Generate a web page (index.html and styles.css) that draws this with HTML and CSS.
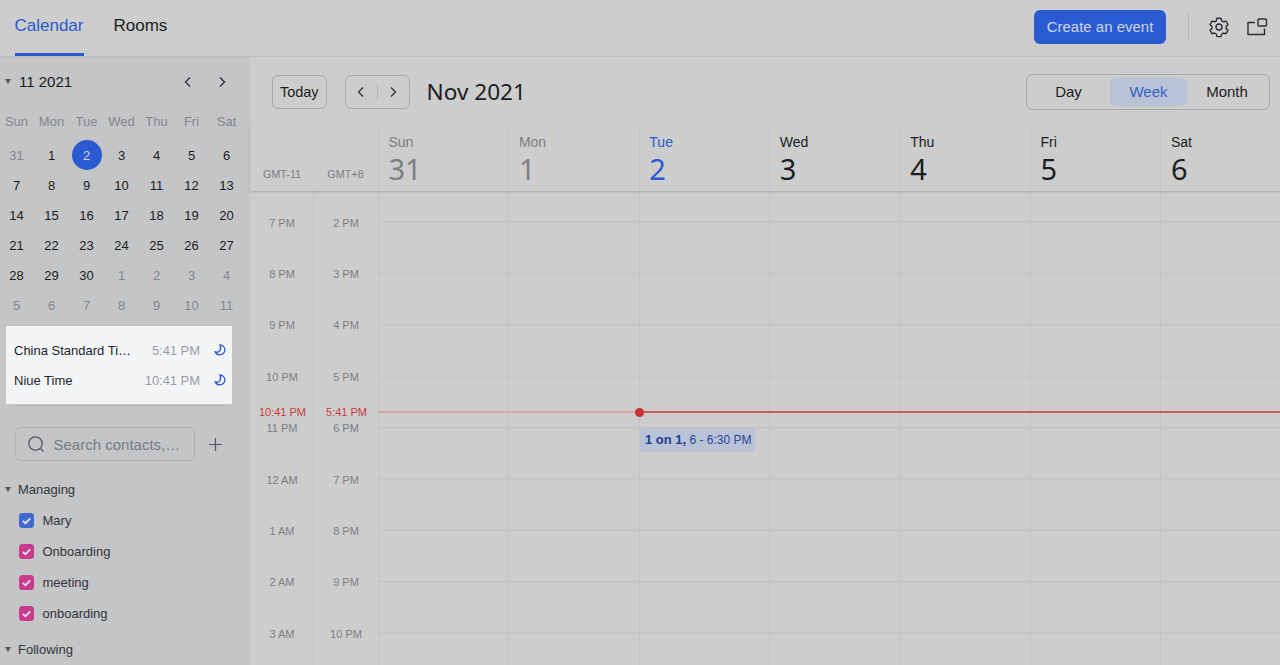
FILE: index.html
```html
<!DOCTYPE html>
<html lang="en">
<head>
<meta charset="utf-8">
<title>Calendar</title>
<link rel="stylesheet" href="styles.css">
</head>
<body>
<header class="topbar">
  <nav class="tabs">
    <a class="tab active">Calendar</a>
    <a class="tab">Rooms</a>
  </nav>
  <div class="top-actions">
    <button class="create">Create an event</button>
    <span class="top-sep"></span>
    <svg class="icon-top" viewBox="0 0 22 22" fill="none" stroke="#2b2f36" stroke-width="1.4" stroke-linejoin="round"><path d="M9 2.200h4l.7 2.600 1.700 1 2.600-.7 2 3.400-1.900 1.900v2l1.900 1.900-2 3.400-2.600-.7-1.700 1-.7 2.600H9l-.7-2.600-1.700-1-2.600.7-2-3.400 1.900-1.900v-2L2 8.500l2-3.400 2.600.7 1.700-1z"/><circle cx="11" cy="11" r="3"/></svg>
    <svg class="icon-top" viewBox="0 0 22 22" fill="none" stroke="#2b2f36" stroke-width="1.4" stroke-linejoin="round"><path d="M9 6.500H2v12h16.500V12.500"/><rect x="12" y="3" width="8.500" height="7" rx="1"/></svg>
  </div>
</header>
<div class="main">
  <aside class="sidebar">
    <div class="mini-head">
      <span class="caret"></span><span class="mini-title">11 2021</span>
      <span class="mini-arrows">
        <svg class="chev" viewBox="0 0 12 12"><path d="M8 1.500 3.500 6 8 10.500"/></svg>
        <svg class="chev" viewBox="0 0 12 12"><path d="M4 1.500 8.500 6 4 10.500"/></svg>
      </span>
    </div>
    <div class="mini-grid">
      <span class="wd">Sun</span><span class="wd">Mon</span><span class="wd">Tue</span><span class="wd">Wed</span><span class="wd">Thu</span><span class="wd">Fri</span><span class="wd">Sat</span>
      <span class="d off">31</span><span class="d">1</span><span class="d"><b class="today">2</b></span><span class="d">3</span><span class="d">4</span><span class="d">5</span><span class="d">6</span>
      <span class="d">7</span><span class="d">8</span><span class="d">9</span><span class="d">10</span><span class="d">11</span><span class="d">12</span><span class="d">13</span>
      <span class="d">14</span><span class="d">15</span><span class="d">16</span><span class="d">17</span><span class="d">18</span><span class="d">19</span><span class="d">20</span>
      <span class="d">21</span><span class="d">22</span><span class="d">23</span><span class="d">24</span><span class="d">25</span><span class="d">26</span><span class="d">27</span>
      <span class="d">28</span><span class="d">29</span><span class="d">30</span><span class="d off">1</span><span class="d off">2</span><span class="d off">3</span><span class="d off">4</span>
      <span class="d off">5</span><span class="d off">6</span><span class="d off">7</span><span class="d off">8</span><span class="d off">9</span><span class="d off">10</span><span class="d off">11</span>
    </div>
    <div class="zones">
      <div class="zone"><span class="zone-name">China Standard Ti…</span><span class="zone-time">5:41 PM</span><svg class="moon" viewBox="0 0 12 12"><path d="M6 1c2.900.3 5 2.500 4.900 5.200-.1 2.700-2.400 4.800-5.100 4.700-2-.1-3.800-1.200-4.500-3 1.500.6 3.300.3 4.400-1 1.100-1.500 1.100-3.900.3-5.900z"/></svg></div>
      <div class="zone"><span class="zone-name">Niue Time</span><span class="zone-time">10:41 PM</span><svg class="moon" viewBox="0 0 12 12"><path d="M6 1c2.900.3 5 2.500 4.900 5.200-.1 2.700-2.400 4.800-5.100 4.700-2-.1-3.800-1.200-4.500-3 1.500.6 3.300.3 4.400-1 1.100-1.500 1.100-3.900.3-5.900z"/></svg></div>
    </div>
    <div class="zone-rule"></div>
    <div class="search-row">
      <div class="search">
        <svg class="search-ic" viewBox="0 0 18 18"><circle cx="8.500" cy="8.500" r="6.700"/><path d="m13.500 13.500 3 3"/></svg>
        <span>Search contacts,…</span>
      </div>
      <svg class="plus" viewBox="0 0 16 16"><path d="M8 1v14M1 8h14"/></svg>
    </div>
    <div class="group"><span class="caret"></span>Managing</div>
    <div class="cal"><span class="check blue"><svg viewBox="0 0 10 10"><path d="m2.500 5.200 1.800 1.600L7.500 3.600"/></svg></span>Mary</div>
    <div class="cal"><span class="check pink"><svg viewBox="0 0 10 10"><path d="m2.500 5.200 1.800 1.600L7.500 3.600"/></svg></span>Onboarding</div>
    <div class="cal"><span class="check pink"><svg viewBox="0 0 10 10"><path d="m2.500 5.200 1.800 1.600L7.500 3.600"/></svg></span>meeting</div>
    <div class="cal"><span class="check pink"><svg viewBox="0 0 10 10"><path d="m2.500 5.200 1.800 1.600L7.500 3.600"/></svg></span>onboarding</div>
    <div class="group following"><span class="caret"></span>Following</div>
  </aside>
  <section class="content">
    <div class="toolbar">
      <button class="btn today-btn">Today</button>
      <div class="btn nav-btn">
        <svg class="chev" viewBox="0 0 12 12"><path d="M8 1.500 3.500 6 8 10.500"/></svg>
        <span class="nav-sep"></span>
        <svg class="chev" viewBox="0 0 12 12"><path d="M4 1.500 8.500 6 4 10.500"/></svg>
      </div>
      <h1 class="range">Nov 2021</h1>
      <div class="segment">
        <span class="seg">Day</span><span class="seg on">Week</span><span class="seg">Month</span>
      </div>
    </div>
    <div class="week-head">
      <div class="gmt first">GMT-11</div>
      <div class="gmt">GMT+8</div>
      <div class="day past"><span class="dn">Sun</span><span class="dd">31</span></div>
      <div class="day past"><span class="dn">Mon</span><span class="dd">1</span></div>
      <div class="day now"><span class="dn">Tue</span><span class="dd">2</span></div>
      <div class="day"><span class="dn">Wed</span><span class="dd">3</span></div>
      <div class="day"><span class="dn">Thu</span><span class="dd">4</span></div>
      <div class="day"><span class="dn">Fri</span><span class="dd">5</span></div>
      <div class="day"><span class="dn">Sat</span><span class="dd">6</span></div>
    </div>
    <div class="week-body">
      <div class="times first">
        <span>7 PM</span><span>8 PM</span><span>9 PM</span><span>10 PM</span><span>11 PM</span><span>12 AM</span><span>1 AM</span><span>2 AM</span><span>3 AM</span>
      </div>
      <div class="times second">
        <span>2 PM</span><span>3 PM</span><span>4 PM</span><span>5 PM</span><span>6 PM</span><span>7 PM</span><span>8 PM</span><span>9 PM</span><span>10 PM</span>
      </div>
      <div class="col"></div><div class="col"></div><div class="col"></div><div class="col"></div><div class="col"></div><div class="col"></div><div class="col"></div>
      <span class="now-label l1">10:41 PM</span>
      <span class="now-label l2">5:41 PM</span>
      <span class="now-past"></span>
      <span class="now-line"></span>
      <span class="now-dot"></span>
      <div class="event"><b>1 on 1,</b> 6 - 6:30 PM</div>
    </div>
  </section>
</div>
</body>
</html>
```

FILE: styles.css
```css
* { box-sizing: border-box; }
html, body { margin: 0; height: 665px; overflow: hidden; }
body {
  background: #cdcdcd;
  color: #1c1e22;
  font-family: "Liberation Sans", Arial, sans-serif;
  font-size: 13px;
}
button { font-family: inherit; }

.topbar {
  height: 57px;
  display: flex;
  justify-content: space-between;
  align-items: center;
  padding: 0 12px 2px 14.500px;
  border-bottom: 1px solid #bebebf;
}
.tabs { display: flex; gap: 30px; height: 56px; align-self: flex-start; }
.tab {
  font-size: 17px;
  line-height: 52px;
  height: 56px;
  color: #1c1e22;
}
.tab.active { color: #2a5bd0; border-bottom: 3px solid #2a5bd0; }
.top-actions { display: flex; align-items: center; }
.create {
  width: 132px;
  height: 34px;
  padding: 0 0 2px;
  border: 0;
  border-radius: 6px;
  background: #2a5bd0;
  color: #cdd6ee;
  font-size: 15px;
}
.top-sep { width: 1px; height: 26px; background: #b7b7b8; margin: 0 9px 0 22px; }
.icon-top { width: 22px; height: 22px; margin-left: 10px; }
.icon-top + .icon-top { margin-left: 16px; }

.main { display: flex; height: 608px; }
.sidebar {
  width: 250px;
  flex: none;
  background: #c4c5c7;
  overflow: hidden;
}
.mini-head {
  display: flex;
  align-items: center;
  height: 50px;
  padding: 0 0 1px 5px;
}
.caret {
  width: 0;
  height: 0;
  flex: none;
  border: 3.500px solid transparent;
  border-top: 5px solid #55585e;
  border-bottom: 0;
  margin-right: 7px;
}
.mini-title { font-size: 15px; color: #1c1e22; margin-left: 1px; }
.mini-arrows { display: flex; gap: 22px; margin-left: auto; margin-right: 22px; }
.chev { width: 12px; height: 12px; fill: none; stroke: #2b2f36; stroke-width: 1.300; }

.mini-grid {
  display: grid;
  grid-template-columns: repeat(7, 35px);
  grid-template-rows: repeat(7, 30px);
  margin-left: -1px;
}
.mini-grid span { display: flex; align-items: center; justify-content: center; }
.wd { color: #85878b; font-size: 13px; margin-top: -1px; margin-bottom: 1px; }
.d { font-size: 13px; color: #1c1e22; transform: translateY(3px); }
.d.off { color: #85878b; }
.today {
  width: 30px;
  height: 30px;
  border-radius: 50%;
  background: #2a5bd0;
  color: #cdd6ee;
  font-weight: 400;
  display: flex;
  align-items: center;
  justify-content: center;
}

.zones {
  width: 226px;
  height: 78px;
  margin: 9px 0 0 6px;
  padding-top: 9px;
  background: #f4f5f7;
}
.zone { display: flex; align-items: center; height: 30px; padding-left: 8px; }
.zone-name { flex: 1; color: #22252a; font-size: 13px; white-space: nowrap; }
.zone-time { color: #9a9da3; font-size: 13px; margin-right: 14px; letter-spacing: -.05px; }
.moon { width: 12px; height: 12px; fill: none; stroke: #2a5bd0; stroke-width: 1.300; margin-right: 6px; }
.zone-rule { height: 1px; margin: 1px 21px 0 14px; background: #b5b6b8; }

.search-row {
  display: flex;
  align-items: center;
  margin: 21px 0 0 14.500px;
}
.search {
  width: 180px;
  height: 34px;
  display: flex;
  align-items: center;
  border: 1px solid #aeafb1;
  border-radius: 6px;
  padding-left: 11px;
  color: #797c82;
  font-size: 15px;
  white-space: nowrap;
}
.search-ic { width: 18px; height: 18px; fill: none; stroke: #55585e; stroke-width: 1.300; margin-right: 9px; flex: none; }
.plus { width: 15px; height: 15px; margin-left: 13px; fill: none; stroke: #55585e; stroke-width: 1.300; }

.group {
  display: flex;
  align-items: center;
  height: 20px;
  margin-top: 18px;
  padding-left: 5px;
  font-size: 13px;
  color: #33363b;
}
.cal {
  display: flex;
  align-items: center;
  height: 31px;
  padding-left: 19px;
  color: #33363b;
  font-size: 13px;
}
.group + .cal { margin-top: 6px; }
.check {
  width: 15px;
  height: 15px;
  border-radius: 3.500px;
  margin-right: 8.500px;
  display: flex;
}
.check svg { width: 15px; height: 15px; fill: none; stroke: #e4e4e8; stroke-width: 1.200; }
.blue { background: #3f69cf; }
.pink { background: #c83b8f; }
.group.following { margin-top: 10px; }

.content { flex: 1; min-width: 0; display: flex; flex-direction: column; }
.toolbar {
  height: 70px;
  flex: none;
  display: flex;
  align-items: center;
  padding: 0 10px 1px 21.500px;
}
.btn {
  height: 34px;
  background: transparent;
  border: 1px solid #a9aaac;
  border-radius: 6px;
  color: #1c1e22;
  font-size: 14.500px;
  padding: 0;
}
.today-btn { width: 55.500px; }
.nav-btn {
  width: 65px;
  margin-left: 17.500px;
  display: flex;
  align-items: center;
  justify-content: space-between;
  padding: 0 9.500px;
}
.nav-sep { width: 1px; height: 18px; background: #b7b7b8; }
.range {
  margin: 0 0 0 17px;
  font-family: "Noto Sans", sans-serif;
  font-weight: 400;
  font-size: 22.600px;
  color: #1c1e22;
}
.segment {
  margin-left: auto;
  width: 244px;
  height: 36px;
  border: 1px solid #a9aaac;
  border-radius: 6px;
  display: grid;
  grid-template-columns: 83px 77px 1fr;
  align-items: center;
  padding-right: 2px;
}
.seg { text-align: center; font-size: 15px; color: #1c1e22; line-height: 28px; }
.seg.on { background: #b8c3d8; color: #3a60bf; border-radius: 6px; }

.week-head {
  height: 64px;
  flex: none;
  display: grid;
  grid-template-columns: 63px 65px repeat(7, 130.420px);
  box-shadow: 0 1px 2px rgba(0, 0, 0, .18);
  position: relative;
  z-index: 1;
}
.gmt { font-size: 10.800px; color: #7d7f84; text-align: center; padding-top: 41px; }
.gmt.first { padding-left: 1px; }
.day {
  border-left: 1px solid #c2c2c3;
  padding: 6px 0 0 9.500px;
  display: flex;
  flex-direction: column;
  color: #1c1e22;
}
.dn { font-size: 14px; line-height: 18px; }
.dd { font-family: "Noto Sans", sans-serif; font-size: 29px; line-height: 36px; }
.day.past { color: #7d7f84; }
.day.now { color: #2a5bd0; }

.week-body {
  flex: 1;
  min-height: 0;
  display: grid;
  grid-template-columns: 63px 65px repeat(7, 130.420px);
  position: relative;
  overflow: hidden;
}
.times { display: flex; flex-direction: column; padding-top: 6px; }
.times.first { padding-left: 1px; }
.times span {
  height: 51.400px;
  flex: none;
  display: flex;
  align-items: center;
  justify-content: center;
  font-size: 11px;
  color: #7d7f84;
}
.times.second { border-left: 1px solid #c2c2c3; }
.col {
  border-left: 1px solid #c2c2c3;
  background-image: linear-gradient(to bottom, transparent 50.400px, #c2c2c3 50.400px);
  background-size: 100% 51.400px;
  background-position: 0 -20px;
}
.now-label { position: absolute; top: 215px; font-size: 11px; color: #c43c3c; width: 64px; text-align: center; }
.l1 { left: 0.500px; }
.l2 { left: 64.500px; }
.now-past { position: absolute; left: 128px; width: 261px; top: 220px; height: 2px; background: #d9a6a6; }
.now-line { position: absolute; left: 389px; right: 0; top: 220px; height: 2px; background: #cc5a5a; }
.now-dot { position: absolute; left: 384.500px; top: 216.500px; width: 9px; height: 9px; border-radius: 50%; background: #c93333; }
.event {
  position: absolute;
  left: 390px;
  top: 237px;
  width: 115px;
  height: 24px;
  background: #b8c3d8;
  border-radius: 3px;
  padding-left: 5px;
  line-height: 24px;
  font-size: 12px;
  color: #2a4596;
  white-space: nowrap;
}
.event b { color: #1d3b8f; font-size: 13px; }
```
